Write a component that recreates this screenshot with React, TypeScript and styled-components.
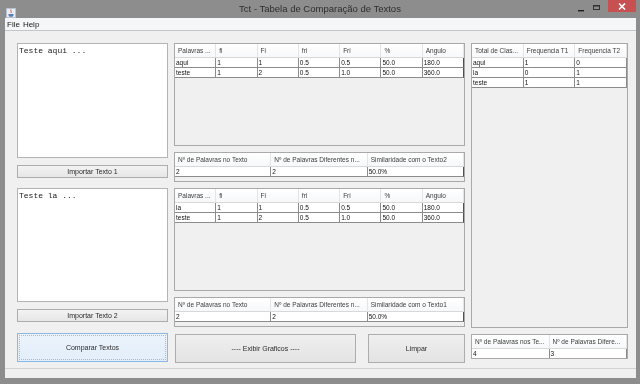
import * as React from "react";
import styled, { createGlobalStyle } from "styled-components";

const GlobalStyle = createGlobalStyle`
  html, body {
    margin: 0;
    padding: 0;
    background: #8d8d8d;
  }
  body {
    font-family: "Liberation Sans", Arial, sans-serif;
    -webkit-font-smoothing: antialiased;
  }
`;

const Window = styled.div`
  width: 640px;
  height: 384px;
  display: flex;
  flex-direction: column;
  background: #8d8d8d;
  overflow: hidden;
  will-change: transform;
`;

const TitleBar = styled.div`
  height: 18px;
  display: grid;
  grid-template-columns: 1fr auto 1fr;
  align-items: start;
  flex-shrink: 0;
`;

const AppIcon = styled.div`
  padding: 4px 0 0 6px;
  height: 9px;
`;

const Title = styled.div`
  font-size: 9.5px;
  line-height: 18px;
  color: #2e2e2e;
  white-space: nowrap;
`;

const Controls = styled.div`
  display: flex;
  justify-content: flex-end;
  align-items: flex-start;
  padding-right: 4px;
`;

const CtrlBox = styled.div`
  width: 15px;
  height: 12px;
`;

const CloseBtn = styled.div`
  width: 28px;
  height: 12px;
  background: #c75050;
  display: flex;
  align-items: center;
  justify-content: center;
  margin-left: 4px;
`;

const Frame = styled.div`
  flex: 1;
  display: flex;
  flex-direction: column;
  padding: 0 4px 6px 5px;
  min-height: 0;
`;

const Inner = styled.div`
  flex: 1;
  display: flex;
  flex-direction: column;
  background: #f0f0f0;
`;

const MenuBar = styled.div`
  height: 12px;
  background: #f5f6f7;
  border-bottom: 1px solid #c5c5c5;
  display: flex;
  align-items: center;
  gap: 3px;
  padding-left: 2px;
`;

const MenuItem = styled.span`
  font-size: 8px;
  color: #1a1a1a;
`;

const Content = styled.div`
  height: 338px;
  box-sizing: border-box;
  padding: 12px 8px 6px 12px;
  display: flex;
  gap: 6px;
  border-bottom: 1px solid #d2d2d2;
`;

const Column = styled.div<{ $w: number }>`
  width: ${(p) => p.$w}px;
  display: flex;
  flex-direction: column;
  flex-shrink: 0;
`;

const TextBox = styled.textarea<{ $mt?: number }>`
  height: 115px;
  box-sizing: border-box;
  border: 1px solid #b4b4b4;
  background: #fff;
  resize: none;
  margin: ${(p) => p.$mt ?? 0}px 0 0 0;
  padding: 2px 1px;
  font-family: "Liberation Mono", "Courier New", monospace;
  font-size: 8px;
  line-height: 10px;
  color: #202020;
  outline: none;
`;

const SmallButton = styled.button<{ $mt: number }>`
  margin-top: ${(p) => p.$mt}px;
  height: 13px;
  padding: 0;
  border: 1px solid #adadad;
  background: linear-gradient(#f3f3f3, #e6e6e6);
  font-family: "Liberation Sans", Arial, sans-serif;
  font-size: 7px;
  color: #2a2a2a;
`;

const BigButton = styled.button<{ $w?: number; $focused?: boolean; $mt?: number }>`
  height: 29px;
  width: ${(p) => (p.$w ? `${p.$w}px` : "100%")};
  margin-top: ${(p) => p.$mt ?? 0}px;
  padding: 0;
  border: 1px solid ${(p) => (p.$focused ? "#8ab8e6" : "#adadad")};
  background: ${(p) =>
    p.$focused
      ? "linear-gradient(#ecf3fb, #e2eefa)"
      : "linear-gradient(#efefef, #e3e3e3)"};
  outline: ${(p) => (p.$focused ? "1px dotted #9cbde3" : "none")};
  outline-offset: -3px;
  font-family: "Liberation Sans", Arial, sans-serif;
  font-size: 7px;
  color: #2a2a2a;
`;

const ButtonRow = styled.div`
  display: flex;
  gap: 12px;
  margin-top: 7px;
  padding-left: 1px;
`;

const Pane = styled.div<{ $h: number; $mt?: number }>`
  height: ${(p) => p.$h}px;
  margin-top: ${(p) => p.$mt ?? 0}px;
  box-sizing: border-box;
  border: 1px solid #a9a9a9;
  background: #f0f0f0;
  overflow: hidden;
  flex-shrink: 0;
`;

const Grid = styled.div<{ $cols: number }>`
  display: grid;
  grid-template-columns: repeat(${(p) => p.$cols}, 1fr);
`;

const HeadCell = styled.div`
  height: 14px;
  box-sizing: border-box;
  background: linear-gradient(#ffffff, #f7f8fa);
  border-right: 1px solid #e4e4e4;
  border-bottom: 1px solid #d8d8d8;
  padding-left: 3px;
  font-size: 6.5px;
  line-height: 13px;
  color: #3c3c3c;
  white-space: nowrap;
  overflow: hidden;
`;

const Cell = styled.div<{ $edge?: boolean }>`
  height: 10px;
  box-sizing: border-box;
  background: #fff;
  border-right: 1px solid ${(p) => (p.$edge ? "#505050" : "#8c8c8c")};
  border-bottom: 1px solid #8c8c8c;
  padding-left: 1px;
  font-size: 6.5px;
  line-height: 9px;
  color: #111;
  white-space: nowrap;
  overflow: hidden;
`;

type TableProps = {
  head: string[];
  rows: string[][];
  edge?: boolean;
};

const DataTable = ({ head, rows, edge }: TableProps) => (
  <Grid $cols={head.length}>
    {head.map((h, i) => (
      <HeadCell key={"h" + i}>{h}</HeadCell>
    ))}
    {rows.map((r, ri) =>
      r.map((c, ci) => (
        <Cell key={ri + "-" + ci} $edge={edge && ci === r.length - 1}>
          {c}
        </Cell>
      ))
    )}
  </Grid>
);

const BottomStrip = styled.div`
  flex: 1;
`;

const freqHead = ["Palavras ...", "fi", "Fi", "fri", "Fri", "%", "Angulo"];

const App = () => {
  return (
    <>
      <GlobalStyle />
      <Window>
        <TitleBar>
          <AppIcon>
            <svg width="10" height="10" viewBox="0 0 10 10">
              <rect x="0.5" y="0.5" width="9" height="9" fill="#e8eef6" stroke="#b8c2cf" />
              <path d="M5 1.5 C4 3 6 3.5 5 5" stroke="#d9482b" fill="none" strokeWidth="0.9" />
              <path d="M2.5 6 h5 v1.2 c0 1 -1 1.5 -2.5 1.5 s-2.5 -0.5 -2.5 -1.5 z" fill="#5b7fb0" />
            </svg>
          </AppIcon>
          <Title>Tct - Tabela de Comparação de Textos</Title>
          <Controls>
            <CtrlBox>
              <svg width="15" height="12" viewBox="0 0 15 12">
                <rect x="4" y="8" width="6" height="1.4" fill="#1e1e1e" />
              </svg>
            </CtrlBox>
            <CtrlBox>
              <svg width="15" height="12" viewBox="0 0 15 12">
                <rect x="4.5" y="3.5" width="6" height="4" fill="none" stroke="#333" />
                <rect x="4.5" y="3.5" width="6" height="1" fill="#333" />
              </svg>
            </CtrlBox>
            <CloseBtn>
              <svg width="8" height="7" viewBox="0 0 8 7">
                <path d="M1 0.5 L7 6.5 M7 0.5 L1 6.5" stroke="#fff" strokeWidth="1.6" />
              </svg>
            </CloseBtn>
          </Controls>
        </TitleBar>
        <Frame>
          <Inner>
            <MenuBar>
              <MenuItem>File</MenuItem>
              <MenuItem>Help</MenuItem>
            </MenuBar>
            <Content>
              <Column $w={151}>
                <TextBox readOnly defaultValue="Teste aqui ..." />
                <SmallButton $mt={7}>Importar Texto 1</SmallButton>
                <TextBox readOnly defaultValue="Teste la ..." $mt={10} />
                <SmallButton $mt={7}>Importar Texto 2</SmallButton>
                <BigButton $focused $mt={11}>
                  Comparar Textos
                </BigButton>
              </Column>
              <Column $w={291}>
                <Pane $h={103}>
                  <DataTable
                    edge
                    head={freqHead}
                    rows={[
                      ["aqui", "1", "1", "0.5", "0.5", "50.0", "180.0"],
                      ["teste", "1", "2", "0.5", "1.0", "50.0", "360.0"],
                    ]}
                  />
                </Pane>
                <Pane $h={30} $mt={6}>
                  <DataTable
                    edge
                    head={[
                      "Nº de Palavras no Texto",
                      "Nº de Palavras Diferentes n...",
                      "Similaridade com o Texto2",
                    ]}
                    rows={[["2", "2", "50.0%"]]}
                  />
                </Pane>
                <Pane $h={103} $mt={6}>
                  <DataTable
                    edge
                    head={freqHead}
                    rows={[
                      ["la", "1", "1", "0.5", "0.5", "50.0", "180.0"],
                      ["teste", "1", "2", "0.5", "1.0", "50.0", "360.0"],
                    ]}
                  />
                </Pane>
                <Pane $h={30} $mt={6}>
                  <DataTable
                    edge
                    head={[
                      "Nº de Palavras no Texto",
                      "Nº de Palavras Diferentes n...",
                      "Similaridade com o Texto1",
                    ]}
                    rows={[["2", "2", "50.0%"]]}
                  />
                </Pane>
                <ButtonRow>
                  <BigButton $w={181}>---- Exibir Graficos ----</BigButton>
                  <BigButton $w={97}>Limpar</BigButton>
                </ButtonRow>
              </Column>
              <Column $w={157}>
                <Pane $h={285}>
                  <DataTable
                    head={["Total de Clas...", "Frequencia T1", "Frequencia T2"]}
                    rows={[
                      ["aqui", "1", "0"],
                      ["la", "0", "1"],
                      ["teste", "1", "1"],
                    ]}
                  />
                </Pane>
                <Pane $h={25} $mt={6}>
                  <DataTable
                    head={["Nº de Palavras nos Te...", "Nº de Palavras Difere..."]}
                    rows={[["4", "3"]]}
                  />
                </Pane>
              </Column>
            </Content>
            <BottomStrip />
          </Inner>
        </Frame>
      </Window>
    </>
  );
};

export default App;
